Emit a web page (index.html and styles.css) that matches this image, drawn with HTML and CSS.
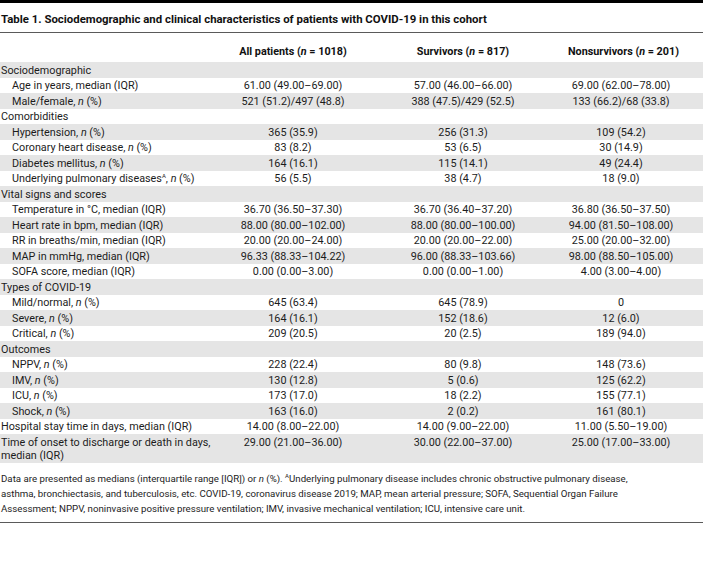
FILE: index.html
```html
<!DOCTYPE html>
<html lang="en">
<head>
<meta charset="utf-8">
<title>Table 1</title>
<link rel="stylesheet" href="styles.css">
</head>
<body>
<div class="page">
  <div class="topbar"></div>
  <h1 class="title">Table 1. Sociodemographic and clinical characteristics of patients with COVID-19 in this cohort</h1>
  <table class="data">
    <colgroup>
      <col class="c1"><col class="c2"><col class="c3"><col class="c4">
    </colgroup>
    <thead>
      <tr>
        <th class="lab"></th>
        <th>All patients (<i>n</i> = 1018)</th>
        <th>Survivors (<i>n</i> = 817)</th>
        <th class="last">Nonsurvivors (<i>n</i> = 201)</th>
      </tr>
    </thead>
    <tbody>
      <tr class="cat"><td colspan="4">Sociodemographic</td></tr>
      <tr><td class="lab sub">Age in years, median (IQR)</td><td>61.00 (49.00–69.00)</td><td>57.00 (46.00–66.00)</td><td class="last">69.00 (62.00–78.00)</td></tr>
      <tr><td class="lab sub">Male/female, <i>n</i> (%)</td><td>521 (51.2)/497 (48.8)</td><td>388 (47.5)/429 (52.5)</td><td class="last">133 (66.2)/68 (33.8)</td></tr>
      <tr class="cat"><td colspan="4">Comorbidities</td></tr>
      <tr><td class="lab sub">Hypertension, <i>n</i> (%)</td><td>365 (35.9)</td><td>256 (31.3)</td><td class="last">109 (54.2)</td></tr>
      <tr><td class="lab sub">Coronary heart disease, <i>n</i> (%)</td><td>83 (8.2)</td><td>53 (6.5)</td><td class="last">30 (14.9)</td></tr>
      <tr><td class="lab sub">Diabetes mellitus, <i>n</i> (%)</td><td>164 (16.1)</td><td>115 (14.1)</td><td class="last">49 (24.4)</td></tr>
      <tr><td class="lab sub">Underlying pulmonary diseases<sup>A</sup>, <i>n</i> (%)</td><td>56 (5.5)</td><td>38 (4.7)</td><td class="last">18 (9.0)</td></tr>
      <tr class="cat"><td colspan="4">Vital signs and scores</td></tr>
      <tr><td class="lab sub">Temperature in °C, median (IQR)</td><td>36.70 (36.50–37.30)</td><td>36.70 (36.40–37.20)</td><td class="last">36.80 (36.50–37.50)</td></tr>
      <tr><td class="lab sub">Heart rate in bpm, median (IQR)</td><td>88.00 (80.00–102.00)</td><td>88.00 (80.00–100.00)</td><td class="last">94.00 (81.50–108.00)</td></tr>
      <tr><td class="lab sub">RR in breaths/min, median (IQR)</td><td>20.00 (20.00–24.00)</td><td>20.00 (20.00–22.00)</td><td class="last">25.00 (20.00–32.00)</td></tr>
      <tr><td class="lab sub">MAP in mmHg, median (IQR)</td><td>96.33 (88.33–104.22)</td><td>96.00 (88.33–103.66)</td><td class="last">98.00 (88.50–105.00)</td></tr>
      <tr><td class="lab sub">SOFA score, median (IQR)</td><td>0.00 (0.00–3.00)</td><td>0.00 (0.00–1.00)</td><td class="last">4.00 (3.00–4.00)</td></tr>
      <tr class="cat"><td colspan="4">Types of COVID-19</td></tr>
      <tr><td class="lab sub">Mild/normal, <i>n</i> (%)</td><td>645 (63.4)</td><td>645 (78.9)</td><td class="last">0</td></tr>
      <tr><td class="lab sub">Severe, <i>n</i> (%)</td><td>164 (16.1)</td><td>152 (18.6)</td><td class="last">12 (6.0)</td></tr>
      <tr><td class="lab sub">Critical, <i>n</i> (%)</td><td>209 (20.5)</td><td>20 (2.5)</td><td class="last">189 (94.0)</td></tr>
      <tr class="cat"><td colspan="4">Outcomes</td></tr>
      <tr><td class="lab sub">NPPV, <i>n</i> (%)</td><td>228 (22.4)</td><td>80 (9.8)</td><td class="last">148 (73.6)</td></tr>
      <tr><td class="lab sub">IMV, <i>n</i> (%)</td><td>130 (12.8)</td><td>5 (0.6)</td><td class="last">125 (62.2)</td></tr>
      <tr><td class="lab sub">ICU, <i>n</i> (%)</td><td>173 (17.0)</td><td>18 (2.2)</td><td class="last">155 (77.1)</td></tr>
      <tr><td class="lab sub">Shock, <i>n</i> (%)</td><td>163 (16.0)</td><td>2 (0.2)</td><td class="last">161 (80.1)</td></tr>
      <tr><td class="lab">Hospital stay time in days, median (IQR)</td><td>14.00 (8.00–22.00)</td><td>14.00 (9.00–22.00)</td><td class="last">11.00 (5.50–19.00)</td></tr>
      <tr class="tall"><td class="lab">Time of onset to discharge or death in days, median (IQR)</td><td>29.00 (21.00–36.00)</td><td>30.00 (22.00–37.00)</td><td class="last">25.00 (17.00–33.00)</td></tr>
    </tbody>
  </table>
  <p class="foot">Data are presented as medians (interquartile range [IQR]) or <i>n</i> (%). <sup>A</sup>Underlying pulmonary disease includes chronic obstructive pulmonary disease,<br>asthma, bronchiectasis, and tuberculosis, etc. COVID-19, coronavirus disease 2019; MAP, mean arterial pressure; SOFA, Sequential Organ Failure<br>Assessment; NPPV, noninvasive positive pressure ventilation; IMV, invasive mechanical ventilation; ICU, intensive care unit.</p>
</div>
</body>
</html>
```

FILE: styles.css
```css
html, body {
  margin: 0;
  padding: 0;
  background: #ffffff;
}

body {
  font-family: Roboto, "Noto Sans", "DejaVu Sans", sans-serif;
  color: #1c1c1c;
}

.page {
  width: 703px;
}

.topbar {
  height: 3px;
  background: #000000;
}

.title {
  margin: 0;
  padding: 9px 0 6px 1px;
  font-size: 11.4px;
  line-height: 14px;
  font-weight: 700;
  color: #111111;
  border-bottom: 1.5px solid #5a5a5a;
}

.data {
  width: 703px;
  border-collapse: collapse;
  table-layout: fixed;
  font-size: 10.8px;
}

.c1 { width: 228px; }
.c2 { width: 130px; }
.c3 { width: 210px; }
.c4 { width: 135px; }

.data th {
  font-weight: 700;
  text-align: center;
  padding: 12px 0 4px;
  line-height: 13px;
  color: #111111;
  white-space: nowrap;
}

.data td {
  text-align: center;
  vertical-align: top;
  padding: 1.5px 0 1px;
  line-height: 13px;
  white-space: nowrap;
}

.data th.last,
.data td.last {
  padding-right: 29px;
}

.data td.lab {
  text-align: left;
  padding-left: 1px;
  white-space: normal;
}

.data td.sub {
  padding-left: 12px;
}

.data tr.cat td {
  text-align: left;
  padding-left: 1px;
}

.data tr.tall td.lab {
  padding-right: 6px;
}

.data tbody tr:nth-child(odd) {
  background: #e5e5e5;
}

sup {
  font-size: 6px;
  line-height: 0;
  vertical-align: 4px;
}

.foot {
  margin: 0;
  padding: 8px 0 6px 1px;
  font-size: 9.7px;
  line-height: 15px;
  color: #1c1c1c;
  border-bottom: 1.5px solid #5a5a5a;
}
```
